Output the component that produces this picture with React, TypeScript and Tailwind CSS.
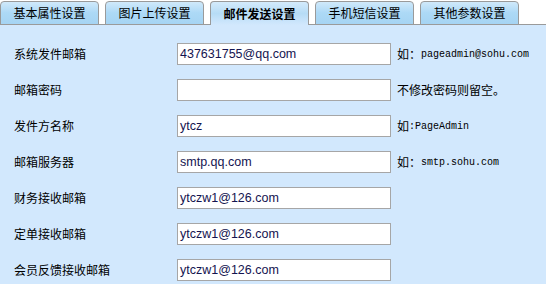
const tabs = ["基本属性设置", "图片上传设置", "邮件发送设置", "手机短信设置", "其他参数设置"];

type Row = { label: string; value: string; hintCn?: string; hintEn?: string };

const rows: Row[] = [
  { label: "系统发件邮箱", value: "437631755@qq.com", hintCn: "如：", hintEn: "pageadmin@sohu.com" },
  { label: "邮箱密码", value: "", hintCn: "不修改密码则留空。" },
  { label: "发件方名称", value: "ytcz", hintCn: "如", hintEn: ":PageAdmin" },
  { label: "邮箱服务器", value: "smtp.qq.com", hintCn: "如：", hintEn: "smtp.sohu.com" },
  { label: "财务接收邮箱", value: "ytczw1@126.com" },
  { label: "定单接收邮箱", value: "ytczw1@126.com" },
  { label: "会员反馈接收邮箱", value: "ytczw1@126.com" },
];

const cn = { fontFamily: '"Noto Sans CJK SC", "Liberation Sans", sans-serif' };

export default function App() {
  return (
    <div className="w-[546px] h-[284px] overflow-hidden bg-white" style={cn}>
      {/* Tabs */}
      <div className="flex gap-[6px] h-[25px] pt-[1px] relative z-10">
        {tabs.map((t, i) => {
          const active = i === 2;
          return (
            <div
              key={t}
              className={
                active
                  ? "w-[99px] h-[24px] flex items-center justify-center text-[12px] font-bold text-black border border-b-0 border-[#9a9a9a] rounded-t-[4px] bg-gradient-to-b from-[#d4ebfc] via-[#b6dcf6] to-[#d2e8fd]"
                  : "w-[99px] h-[24px] flex items-center justify-center text-[12px] text-black border border-[#9a9a9a] rounded-t-[4px] bg-gradient-to-b from-[#d0e9fb] via-[#acd9f6] to-[#a6d4f3]"
              }
            >
              {t}
            </div>
          );
        })}
      </div>

      {/* Panel */}
      <div className="-mt-px border-t border-[#9a9a9a] bg-[#d2e8fd] h-[260px] pt-[11px] pl-[14px]">
        {rows.map((r) => (
          <div key={r.label} className="flex items-center h-9">
            <div className="w-[163px] text-[12px] text-black">{r.label}</div>
            <div
              className="w-[214px] h-[22px] bg-white border border-[#a6a6a6] pl-[2px] flex items-center text-[12.5px] text-[#141450]"
              style={{ fontFamily: '"Liberation Sans", Arial, sans-serif' }}
            >
              {r.value}
            </div>
            {(r.hintCn || r.hintEn) && (
              <div className="ml-[6px] flex items-center text-black">
                {r.hintCn && <span className="text-[12px]">{r.hintCn}</span>}
                {r.hintEn && (
                  <span className="text-[10px]" style={{ fontFamily: '"Liberation Mono", monospace' }}>
                    {r.hintEn}
                  </span>
                )}
              </div>
            )}
          </div>
        ))}
      </div>
    </div>
  );
}
